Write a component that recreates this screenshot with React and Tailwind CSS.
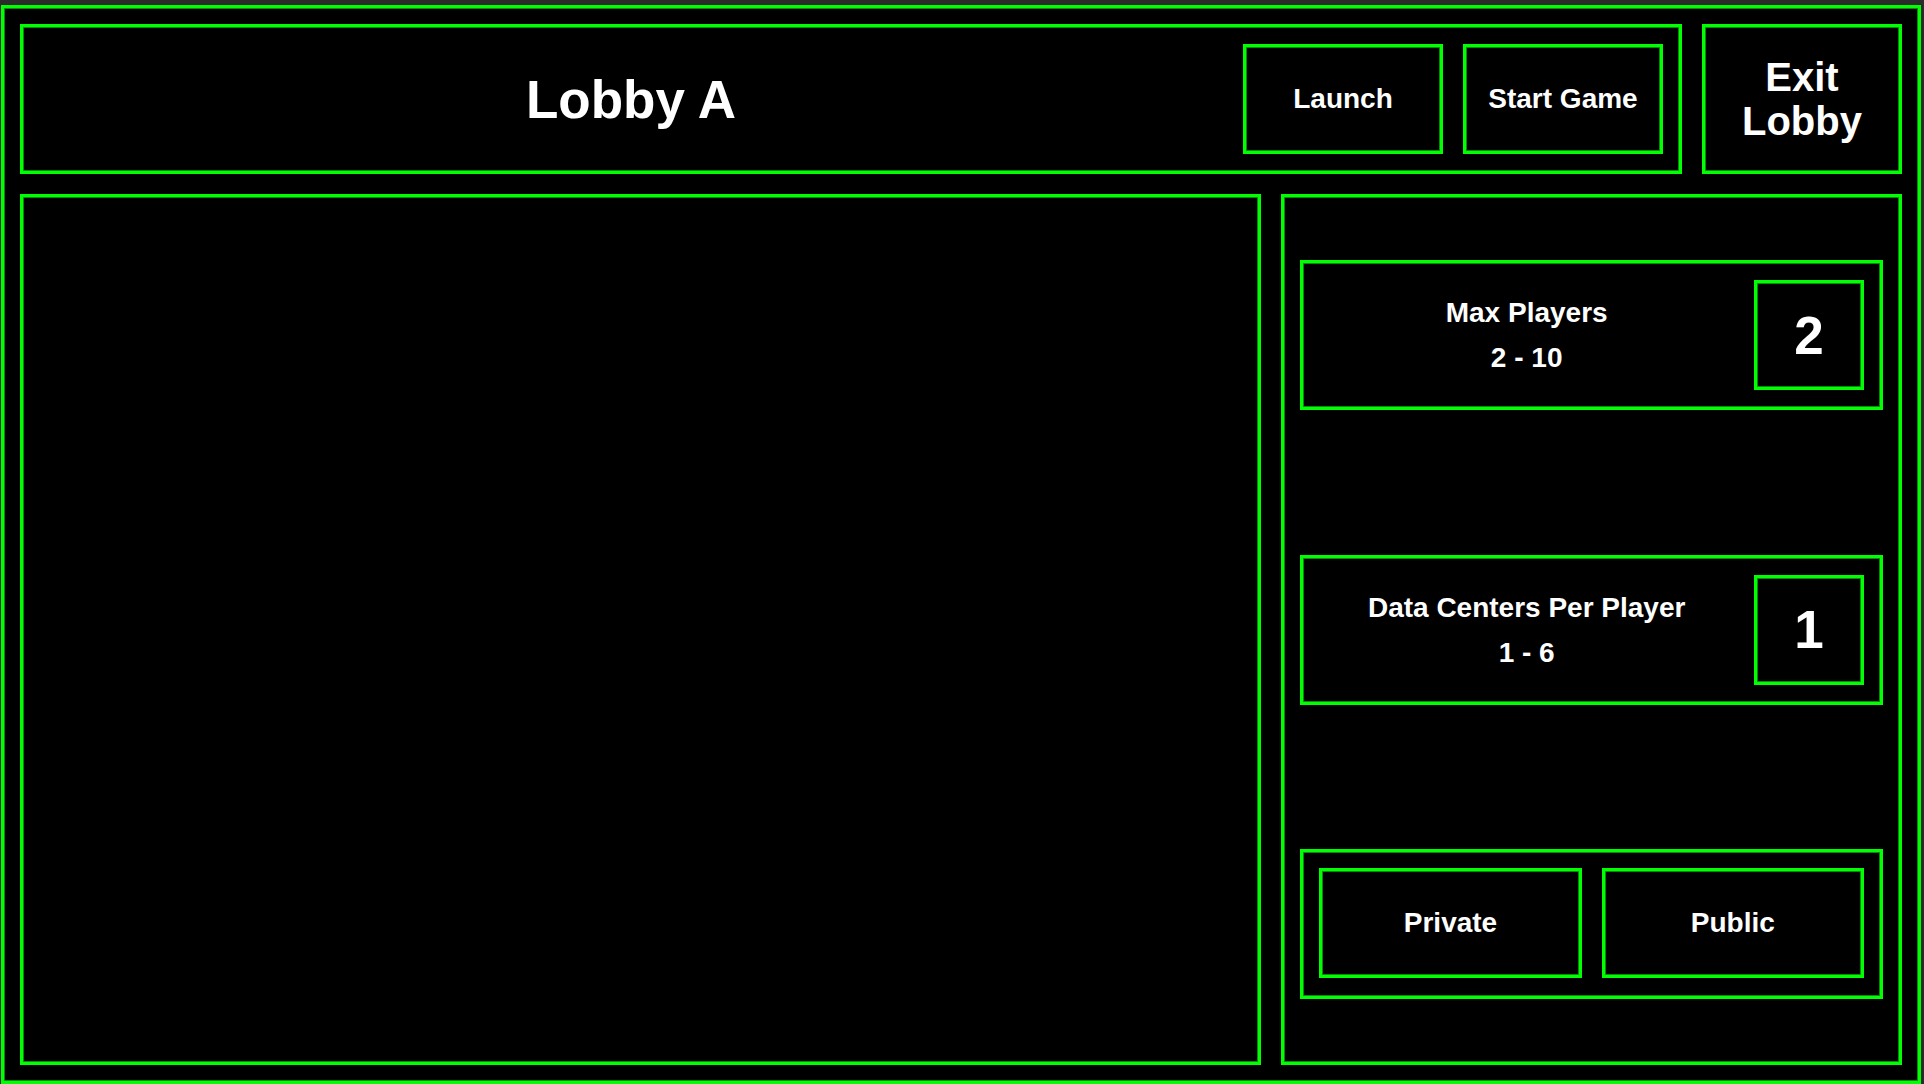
import React from 'react';

const box = "border-[3px] border-[#00ff00] shadow-[inset_0_0_0_1px_#0c8c0c] bg-black";
const font = { fontFamily: '"Liberation Sans", Arial, sans-serif' };

const SettingCard = ({ label, range, value }) => (
  <div className={`${box} h-[150px] p-4 flex items-center gap-5`}>
    <div className="flex-1 flex flex-col items-center text-white font-bold text-[28px] leading-[45px]">
      <span>{label}</span>
      <span>{range}</span>
    </div>
    <div className={`${box} w-[110px] h-[110px] flex items-center justify-center text-white font-bold text-[53px] leading-none`}>
      {value}
    </div>
  </div>
);

const App = () => {
  return (
    <div className="w-[1924px] h-[1084px] bg-[#2b2b2b] overflow-hidden" style={font}>
      <div className={`${box} ml-[1px] mt-[5px] w-[1920px] h-[1079px] p-4 flex flex-col gap-5`}>
        {/* Top row */}
        <div className="flex gap-5 h-[150px]">
          <div className={`${box} flex-1 px-4 flex items-center gap-5`}>
            <h1 className="flex-1 text-center text-white font-bold text-[53px] leading-none">Lobby A</h1>
            <button className={`${box} w-[200px] h-[110px] text-white font-bold text-[28px]`}>Launch</button>
            <button className={`${box} w-[200px] h-[110px] text-white font-bold text-[28px]`}>Start Game</button>
          </div>
          <button className={`${box} w-[200px] h-[150px] text-white font-bold text-[40px] leading-[44px] flex flex-col items-center justify-center`}>
            <span>Exit</span>
            <span>Lobby</span>
          </button>
        </div>

        {/* Main area */}
        <div className="flex-1 grid grid-cols-[2fr_1fr] gap-5 min-h-0">
          <div className={box}></div>
          <div className={`${box} px-4 py-[63px] flex flex-col justify-between`}>
            <SettingCard label="Max Players" range="2 - 10" value="2" />
            <SettingCard label="Data Centers Per Player" range="1 - 6" value="1" />
            <div className={`${box} h-[150px] p-4 flex gap-5`}>
              <button className={`${box} flex-1 h-[110px] text-white font-bold text-[28px]`}>Private</button>
              <button className={`${box} flex-1 h-[110px] text-white font-bold text-[28px]`}>Public</button>
            </div>
          </div>
        </div>
      </div>
    </div>
  );
};

export default App;
